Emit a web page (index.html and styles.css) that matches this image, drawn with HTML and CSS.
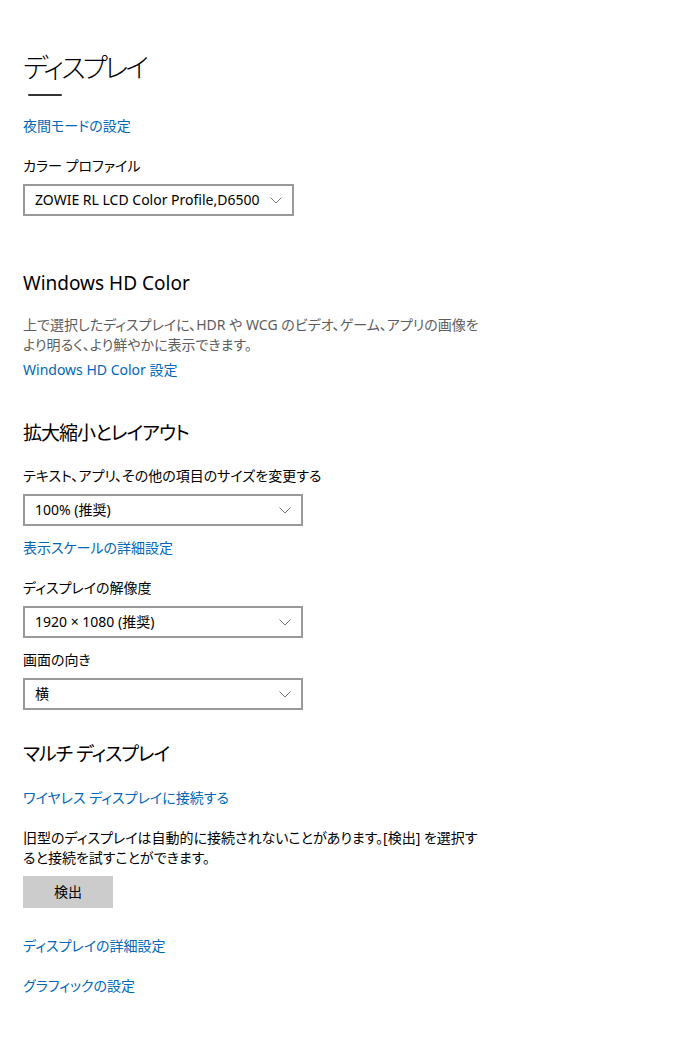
FILE: index.html
```html
<!DOCTYPE html>
<html lang="ja">

    <head>
        <!-- Meta Data -->
        <meta charset="UTF-8">

        <!-- Title -->
        <title>ディスプレイ</title>

        <!-- Style -->
        <link rel="stylesheet" href="styles.css">
    </head>

    <body>
        <!-- Content -->
        <main class="page">
            <h1 class="page-title">ディスプレイ</h1>
            <div class="title-bar"></div>

            <a class="link first-link" href="#">夜間モードの設定</a>

            <div class="field">
                <div class="label">カラー プロファイル</div>
                <div class="select select-auto">
                    <span>ZOWIE RL LCD Color Profile,D6500</span>
                    <svg class="chevron" width="12" height="7" viewBox="0 0 12 7"><path d="M0.5 0.5 L6 6 L11.5 0.5" fill="none" stroke="#767676" stroke-width="1"/></svg>
                </div>
            </div>

            <!-- Windows HD Color -->
            <section class="group hd-group">
                <h2>Windows HD Color</h2>
                <p class="desc">上で選択したディスプレイに、HDR や WCG のビデオ、ゲーム、アプリの画像を<br>より明るく、より鮮やかに表示できます。</p>
                <a class="link desc-link" href="#">Windows HD Color 設定</a>
            </section>

            <!-- Scale and layout -->
            <section class="group scale-group">
                <h2 class="heading-ja">拡大縮小とレイアウト</h2>
                <div class="field">
                    <div class="label">テキスト、アプリ、その他の項目のサイズを変更する</div>
                    <div class="select">
                        <span>100% (推奨)</span>
                        <svg class="chevron" width="12" height="7" viewBox="0 0 12 7"><path d="M0.5 0.5 L6 6 L11.5 0.5" fill="none" stroke="#767676" stroke-width="1"/></svg>
                    </div>
                </div>
                <a class="link field-link" href="#">表示スケールの詳細設定</a>
                <div class="field">
                    <div class="label">ディスプレイの解像度</div>
                    <div class="select">
                        <span>1920 × 1080 (推奨)</span>
                        <svg class="chevron" width="12" height="7" viewBox="0 0 12 7"><path d="M0.5 0.5 L6 6 L11.5 0.5" fill="none" stroke="#767676" stroke-width="1"/></svg>
                    </div>
                </div>
                <div class="field field-tight">
                    <div class="label">画面の向き</div>
                    <div class="select">
                        <span>横</span>
                        <svg class="chevron" width="12" height="7" viewBox="0 0 12 7"><path d="M0.5 0.5 L6 6 L11.5 0.5" fill="none" stroke="#767676" stroke-width="1"/></svg>
                    </div>
                </div>
            </section>

            <!-- Multiple displays -->
            <section class="group multi-group">
                <h2 class="heading-ja">マルチ ディスプレイ</h2>
                <a class="link" href="#">ワイヤレス ディスプレイに接続する</a>
                <p class="note">旧型のディスプレイは自動的に接続されないことがあります。[検出] を選択す<br>ると接続を試すことができます。</p>
                <button class="button" type="button">検出</button>
                <a class="link after-button" href="#">ディスプレイの詳細設定</a>
                <a class="link" href="#">グラフィックの設定</a>
            </section>
        </main>
    </body>

</html>
```

FILE: styles.css
```css
html {
    background-color: #fff;
}

body {
    margin: 0;
    color: #000;
    font-family: "Noto Sans", "Noto Sans CJK JP", sans-serif;
    font-size: 14px;
    line-height: 20px;
    font-feature-settings: "palt";
}

.page {
    display: flex;
    flex-direction: column;
    align-items: flex-start;
    padding: 48px 23px 40px 23px;
}

.page-title {
    margin: 0;
    font-size: 27px;
    line-height: 40px;
    font-weight: 300;
    letter-spacing: -3px;
}

.title-bar {
    width: 34px;
    height: 2px;
    margin: 6px 0 0 5px;
    background: #333;
    border-radius: 1px;
}

.link {
    color: #0067b8;
    text-decoration: none;
    margin-top: 20px;
}

.first-link {
    margin-top: 20px;
}

.field {
    display: flex;
    flex-direction: column;
    align-items: flex-start;
    margin-top: 20px;
}

.field-tight {
    margin-top: 12px;
}

.label {
    margin-bottom: 8px;
}

.select {
    box-sizing: border-box;
    display: flex;
    align-items: center;
    justify-content: space-between;
    width: 280px;
    height: 32px;
    padding: 0 10px;
    border: 2px solid #999;
}

.select-auto {
    width: auto;
    gap: 10px;
}

.chevron {
    flex: none;
}

.group {
    display: flex;
    flex-direction: column;
    align-items: flex-start;
}

.group h2 {
    margin: 0;
    font-size: 19px;
    line-height: 28px;
    font-weight: 400;
}

.group .heading-ja {
    letter-spacing: -1px;
}

.hd-group {
    margin-top: 53px;
}

.scale-group {
    margin-top: 39px;
}

.scale-group .field:first-of-type {
    margin-top: 19px;
}

.field-link {
    margin-top: 12px;
}

.multi-group {
    margin-top: 30px;
}

.desc {
    margin: 18px 0 0 0;
    color: #5d5d5d;
}

.desc-link {
    margin-top: 5px;
}

.note {
    margin: 20px 0 0 0;
}

.button {
    width: 90px;
    height: 32px;
    margin-top: 8px;
    border: none;
    background: #ccc;
    color: #000;
    font: inherit;
    padding: 0;
}

.after-button {
    margin-top: 28px;
}
```
